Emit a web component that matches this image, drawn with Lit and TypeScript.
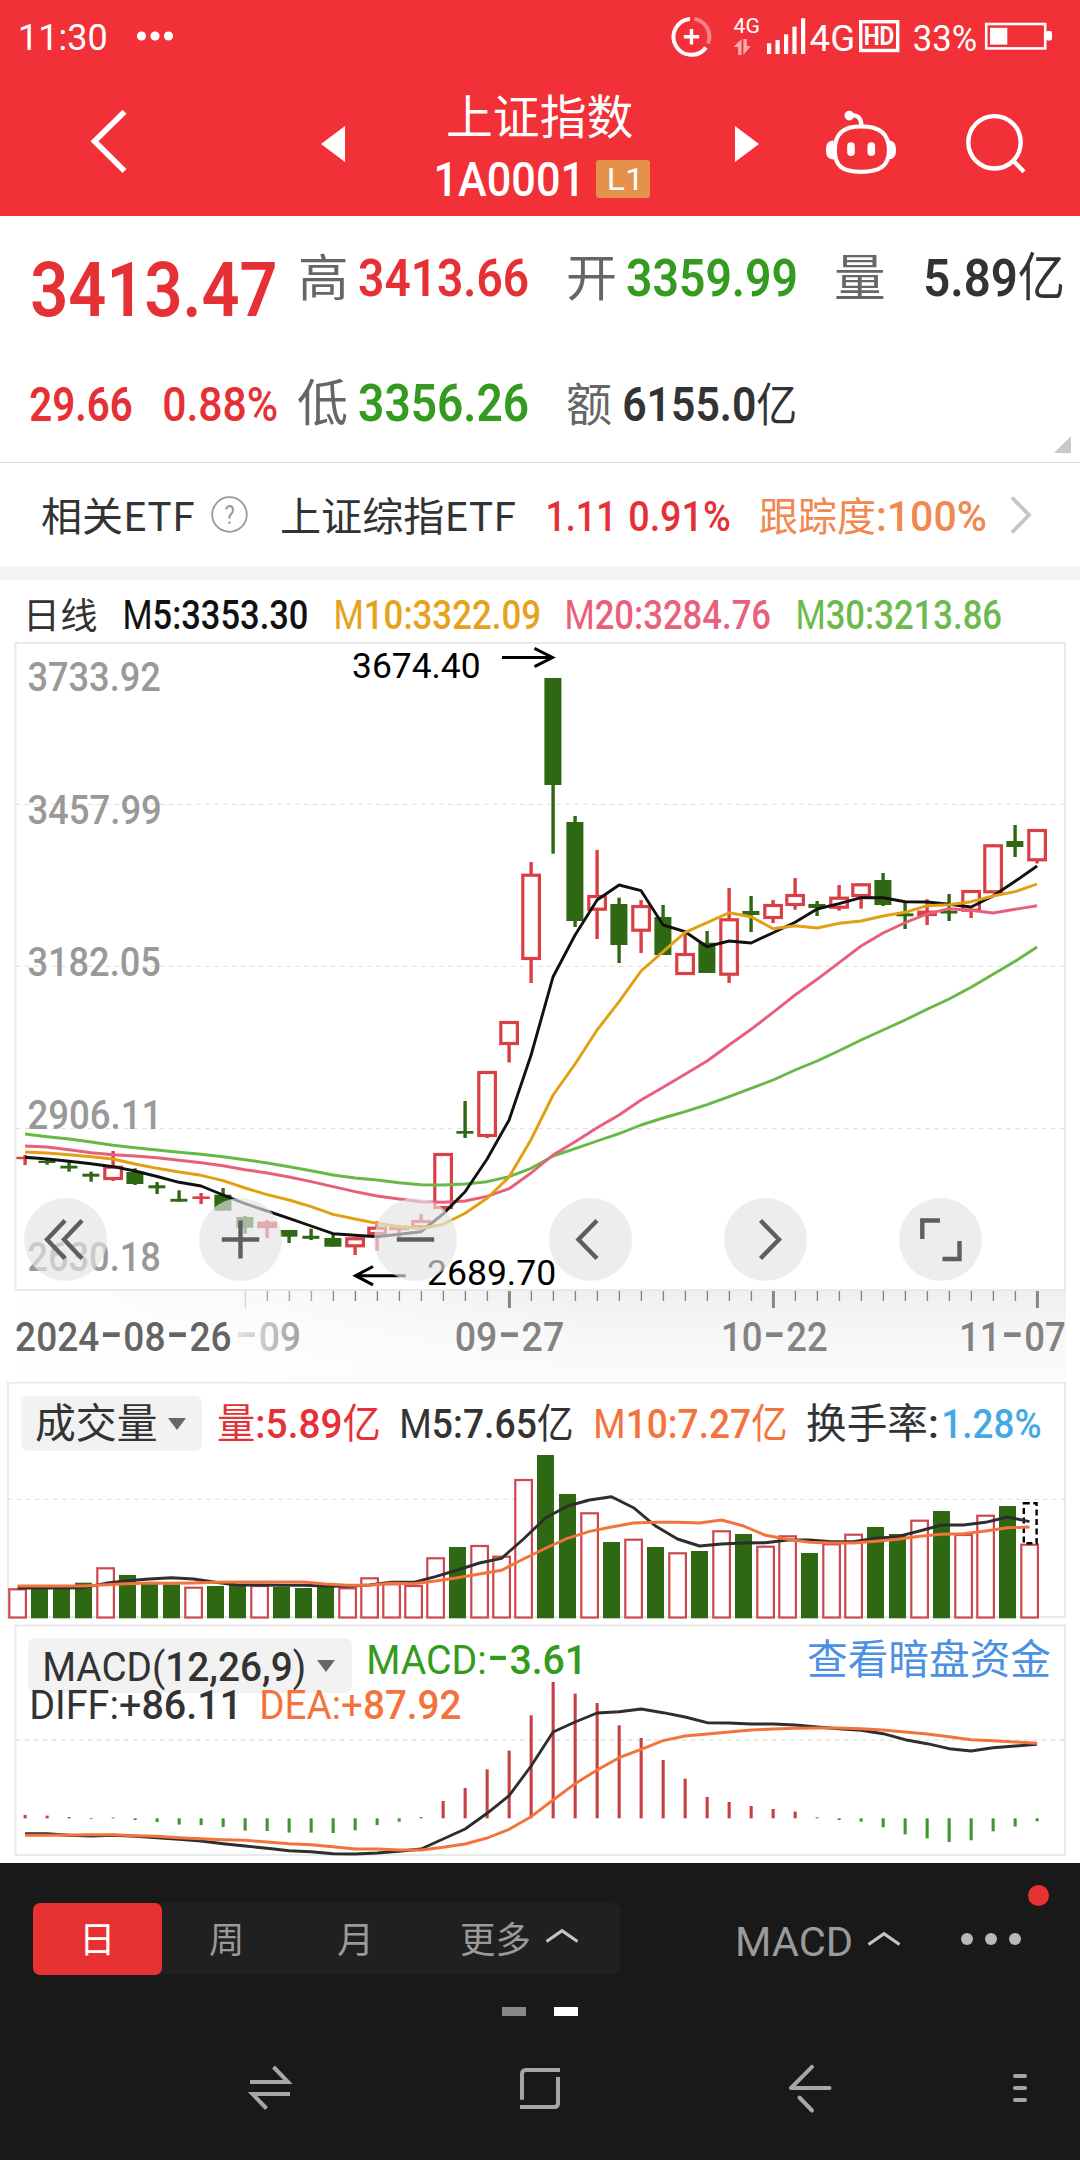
import { LitElement, html, svg, css } from "lit";
import { customElement } from "lit/decorators.js";

/* ---------- text fitted to an ink width ---------- */

const NUM = 'Roboto, "Noto Sans CJK SC", sans-serif';
const HAN = '"Noto Sans CJK SC", sans-serif';
const WIDE = 'Inter, Roboto, sans-serif';

interface Seg { t: string; size?: number; weight?: number; family?: string; dy?: number; cls?: string; }
type Content = string | Seg[];

const ctx = document.createElement("canvas").getContext("2d")!;

function fitted(content: Content, x: number, y: number, w: number, size: number, cls: string, weight = 500, family = NUM) {
  const segs: Seg[] = typeof content === "string" ? [{ t: content }] : content;
  let total = 0, left = 0, right = 0;
  segs.forEach((s, i) => {
    ctx.font = `${s.weight ?? weight} ${s.size ?? size}px ${s.family ?? family}`;
    const m = ctx.measureText(s.t);
    if (i === 0) left = -m.actualBoundingBoxLeft;
    if (i === segs.length - 1) right = m.width - m.actualBoundingBoxRight;
    total += m.width;
  });
  const k = w / (total - left - right);
  let prev = 0;
  return svg`<text class=${cls} font-family=${family} font-size=${size} font-weight=${weight}
    transform=${`translate(${x} ${y}) scale(${k} 1) translate(${-left} 0)`}>${segs.map((s) => {
      const d = (s.dy ?? 0) - prev;
      prev = s.dy ?? 0;
      return svg`<tspan class=${s.cls ?? cls} dy=${d} font-family=${s.family ?? family} font-size=${s.size ?? size} font-weight=${s.weight ?? weight}>${s.t}</tspan>`;
    })}</text>`;
}

/* A box as tall as the capitals; its lower edge is the baseline. */
function ink(content: Content, w: number, size: number, cls: string, weight = 500, family = NUM) {
  const h = Math.round(size * 0.711);
  return html`<svg class="ink" width=${w} height=${h} viewBox="0 0 ${w} ${h}">${fitted(content, 0, h, w, size, cls, weight, family)}</svg>`;
}

const han = (t: string): Seg => ({ t, family: HAN, weight: 400 });
const thin = (t: string): Seg => ({ t, weight: 400 });
const dash = (t = "-"): Seg => ({ t, family: WIDE, weight: 400, size: 58, dy: 1.5 });

/* ---------- series ---------- */

// kind, body top, body bottom, wick top, wick bottom
type Candle = ["r" | "g", number, number, number, number];
const candles: Candle[] = [
  ["r", 1156.8, 1159.2, 1155, 1165], ["g", 1160.7, 1163, 1159.7, 1164.7], ["g", 1165.7, 1168.5, 1162, 1171.7],
  ["g", 1173.7, 1176.7, 1171.7, 1181.7], ["r", 1165.7, 1180, 1151, 1181], ["g", 1172, 1184, 1168.3, 1185],
  ["g", 1185.3, 1188.3, 1182, 1194], ["g", 1198.8, 1201.7, 1190.3, 1201.7], ["r", 1196.4, 1199, 1193, 1204],
  ["g", 1194.7, 1210.7, 1188, 1210.7], ["g", 1217, 1227.7, 1216, 1233.7], ["r", 1221.7, 1228, 1220, 1238],
  ["g", 1230, 1236.7, 1230, 1243], ["g", 1235.8, 1238.8, 1228.7, 1240], ["g", 1238, 1246.7, 1233.7, 1246.7],
  ["r", 1237.3, 1247.3, 1237.3, 1255], ["r", 1226.7, 1235, 1221.3, 1250.7], ["r", 1225.7, 1230, 1225.7, 1237],
  ["r", 1220, 1228.3, 1214, 1228.3], ["r", 1153, 1209, 1153, 1210.7], ["g", 1131, 1133.7, 1101, 1138],
  ["r", 1071, 1137, 1071, 1138], ["r", 1021, 1045, 1021, 1062.5], ["r", 873.7, 960, 862, 983],
  ["g", 678, 785, 678, 853.7], ["g", 822, 921, 816, 927], ["r", 895, 910.7, 850, 939],
  ["g", 904, 945, 897.7, 963], ["r", 905, 931.7, 900, 953], ["g", 917, 955, 905, 955],
  ["r", 953, 975, 932, 975], ["g", 942.7, 973, 931, 973], ["r", 918.3, 975.7, 888, 983],
  ["g", 911, 915, 896, 932], ["r", 904, 919, 900, 923], ["r", 894, 906, 878, 909.7],
  ["g", 904, 908, 901, 916], ["r", 896.7, 908.7, 885, 910.7], ["r", 883.3, 897, 883.3, 908.7],
  ["g", 880, 905, 873, 906], ["g", 913.3, 916.3, 902.7, 929], ["r", 910.7, 916, 899.3, 925],
  ["g", 910.8, 913.5, 894, 921], ["r", 890, 911.7, 890, 918], ["r", 844.3, 893.3, 844.3, 893.3],
  ["g", 841, 847, 825, 857], ["r", 829, 861.3, 829, 863.5],
];

const m5 = [1157.3, 1159, 1161.3, 1163.7, 1166.7, 1171, 1176.5, 1182.3, 1186, 1195, 1203.7, 1211, 1218.3, 1226, 1233.7, 1235.3, 1236.7, 1234.3, 1231.7, 1214, 1191.7, 1159, 1120, 1055, 976.7, 935, 900, 885, 890.7, 925, 931.7, 946.7, 941, 943, 932.7, 922.3, 909, 903.7, 897.7, 897.7, 901.7, 902, 904.3, 907, 896, 881.3, 866];
const m10 = [1152, 1153, 1154.7, 1156.7, 1159, 1164, 1168.3, 1172, 1175.3, 1180.7, 1188, 1194.7, 1200, 1206.7, 1214.3, 1219, 1223.3, 1226.7, 1228.5, 1224.3, 1213.3, 1198.3, 1177, 1139.5, 1095, 1064, 1030, 1001.7, 971, 951.7, 932.3, 922.7, 912.7, 916.7, 928.7, 925.7, 928, 923.3, 921, 916, 912.3, 905.7, 904.7, 901.7, 896, 891.7, 884];
const m20 = [1146, 1147, 1149.7, 1152.7, 1154.7, 1156, 1157.7, 1160.3, 1162.7, 1165.7, 1169.7, 1173, 1177, 1181.7, 1186.7, 1191.7, 1196, 1199, 1201.7, 1202.3, 1201, 1196.3, 1188.7, 1173, 1155, 1141.7, 1127.7, 1115, 1100, 1087.3, 1074.3, 1061, 1045, 1029.3, 1012.3, 995, 979.3, 962.7, 946, 933, 922.7, 914, 908.7, 910.3, 913, 909.3, 905.7];
const m30 = [1134, 1136.7, 1139, 1142, 1145.3, 1147.7, 1150, 1152.3, 1154.3, 1156.7, 1159.7, 1163, 1166.7, 1170.7, 1175, 1178, 1180, 1182.7, 1184.7, 1185, 1184, 1181.7, 1176.7, 1168.3, 1156, 1148.7, 1141, 1133.7, 1125, 1118, 1111.7, 1104.7, 1096.7, 1088.3, 1080, 1070, 1061, 1050.7, 1040, 1030, 1020, 1009.3, 999, 987.3, 974.3, 961.3, 947];

const volumes: ["r" | "g", number][] = [
  ["r", 1588.3], ["g", 1588.3], ["g", 1588.3], ["g", 1582.7], ["r", 1567.3], ["g", 1575], ["g", 1583.3], ["g", 1584.3],
  ["r", 1586.7], ["g", 1586], ["g", 1585], ["r", 1585], ["g", 1587], ["g", 1588], ["g", 1586], ["r", 1587.3],
  ["r", 1577.3], ["r", 1583.3], ["r", 1585], ["r", 1557.3], ["g", 1547], ["r", 1545], ["r", 1555.7], ["r", 1479],
  ["g", 1455], ["g", 1494], ["r", 1512.3], ["g", 1542], ["r", 1538.7], ["g", 1547], ["r", 1552.3], ["g", 1551],
  ["r", 1530.3], ["g", 1534], ["r", 1545.7], ["r", 1535.3], ["g", 1553], ["r", 1543.3], ["r", 1533.7], ["g", 1527],
  ["g", 1534], ["r", 1519.7], ["g", 1511], ["r", 1534], ["r", 1514.7], ["g", 1506], ["r", 1543.7],
];
const v5 = [1588, 1588, 1588, 1587.7, 1583.3, 1580.7, 1579, 1577.7, 1579, 1582.3, 1585, 1585, 1585.3, 1585.3, 1586, 1586.3, 1585, 1582.3, 1582.3, 1576.7, 1570, 1563, 1558.3, 1539, 1518, 1506, 1500, 1496.7, 1507.7, 1526, 1539, 1546, 1544, 1543, 1542.7, 1540, 1540, 1541.7, 1541.7, 1538.3, 1536.7, 1531, 1525, 1525, 1522.3, 1517, 1521.7];
const v10 = [1586, 1586, 1586, 1586, 1584.7, 1583.7, 1583, 1583.3, 1583, 1582.3, 1582, 1582, 1582, 1582, 1584, 1585.3, 1585.3, 1583.3, 1583.7, 1581, 1577.7, 1574, 1570.3, 1559, 1548.3, 1538.3, 1531.3, 1527, 1523, 1522.3, 1522.3, 1523, 1520, 1526, 1535.3, 1539.3, 1542.3, 1543, 1543, 1541.3, 1539.3, 1536.3, 1534.3, 1533.7, 1531, 1527.7, 1527];

const hist = [3.3, 2.7, 1.3, -0.8, 0.8, -1.7, -3.7, -6.3, -6.7, -8.7, -12.3, -12.7, -14.3, -14.3, -14.7, -12, -6.7, -3.3, 1.2, 17.3, 30.3, 49, 67.7, 103, 136.3, 124.7, 115.3, 93, 80.3, 58.3, 39.7, 21.3, 16.3, 12.3, 9.3, 6.7, 1, -1.7, -3.3, -9, -16, -20, -23.7, -22, -13, -8.3, -3];
const diff = [1833.7, 1833.7, 1835.3, 1836, 1835.3, 1836.3, 1837.7, 1839.3, 1841, 1843.7, 1846, 1848.3, 1850.7, 1851.7, 1853.7, 1854, 1853, 1851.3, 1849, 1839, 1829, 1813.3, 1795.7, 1766, 1732, 1722, 1713, 1711.7, 1709, 1712.7, 1717, 1722.7, 1723, 1724, 1724, 1725, 1727, 1728.7, 1730.3, 1733.7, 1739.7, 1743.7, 1748.7, 1751, 1747.7, 1746, 1744.3];
const dea = [1835.3, 1835.3, 1835, 1834.7, 1834.7, 1835.7, 1836.3, 1837.7, 1838.7, 1839.7, 1840.3, 1842, 1843.7, 1844.7, 1846.7, 1849, 1849, 1850, 1850, 1847.3, 1844, 1838, 1829.3, 1816.7, 1800, 1783.7, 1770, 1757.7, 1749.3, 1740.7, 1736, 1734, 1732, 1730, 1729, 1728.3, 1728, 1728, 1728.7, 1730, 1732, 1734, 1736.7, 1739.7, 1740.7, 1742, 1743.3];

const STEP = 22;
const kx = (i: number) => 25.1 + STEP * i;
const vx = (i: number) => 17.5 + STEP * i;
const pts = (ys: number[], x: (i: number) => number) => ys.map((y, i) => `${x(i).toFixed(1)},${y}`).join(" ");
const curve = (ys: number[], x: (i: number) => number, cls: string) => svg`<polyline class="line ${cls}" points=${pts(ys, x)} />`;

const shared = css`
  svg { display: block; overflow: visible; }
  svg.canvas { position: absolute; left: 0; top: 0; overflow: hidden; }
  .ink { flex: none; }
  text { white-space: pre; }
  .white { fill: #fff; } .red { fill: #e53035; } .green { fill: #349a20; } .dark { fill: #333; }
  .grey { fill: #666; } .mute { fill: #999; } .orange { fill: #f08850; } .black { fill: #111; }
  .gold { fill: #e5a21a; } .pink { fill: #e9607c; } .lime { fill: #6cba4e; } .coral { fill: #f4733c; }
  .sky { fill: #45a8e6; } .blue { fill: #4b90e2; } .pure { fill: #000; } .axis { fill: #838383; } .date { fill: #646464; }
  .frame { fill: none; stroke: #e9e9e9; stroke-width: 2; }
  .grid { stroke: #e2e2e2; stroke-width: 1.3; stroke-dasharray: 4.5 4.5; }
  .line { fill: none; stroke-width: 2.9; stroke-linejoin: round; }
  .s-black { stroke: #111; } .s-gold { stroke: #e0a012; } .s-pink { stroke: #e85f7c; } .s-lime { stroke: #66b944; }
  .s-dark { stroke: #2e2e2e; } .s-coral { stroke: #f4733c; }
  .up { fill: #fff; stroke: #d93f45; stroke-width: 3.2; }
  .upv { fill: #fff; stroke: #cc484e; stroke-width: 2.2; }
  .down { fill: #2f6813; }
  .pill { display: flex; align-items: flex-end; background: #f2f2f2; border-radius: 7px; box-sizing: border-box; }
`;

/* ---------- header ---------- */

@customElement("app-header")
class AppHeader extends LitElement {
  static styles = [shared, css`
    :host { display: block; height: 216px; background: #f13037; }
    .status { display: flex; justify-content: space-between; height: 72px; padding: 0 28px 0 21px; }
    .clock { display: flex; align-items: flex-end; height: 50px; gap: 31px; }
    .clock .dots { margin-bottom: 9px; }
    .bar { display: grid; grid-template-columns: 91px 230px 114px 300px 91px 140px auto; height: 144px; }
    .back { margin-top: 38px; } .tri { margin-top: 54px; }
    .robot { margin-top: 38px; } .search { margin-top: 41px; }
    .title { display: flex; flex-direction: column; }
    .name { display: flex; align-items: flex-end; height: 62px; padding-left: 13px; }
    .code { display: flex; align-items: flex-end; height: 62px; padding-left: 1.5px; }
    .badge { display: flex; align-items: flex-end; width: 54px; height: 38px; box-sizing: border-box; padding: 0 0 8px 13px;
      margin: 0 0 -2px 18.5px; border-radius: 3px; background: #e5904b; }
  `];
  render() {
    return html`
      <div class="status">
        <div class="clock">
          ${ink("11:30", 85, 37, "white", 400)}
          <svg class="dots" width="36" height="10"><circle class="white" cx="4.5" cy="5" r="4.6"/><circle class="white" cx="18" cy="5" r="4.6"/><circle class="white" cx="31.5" cy="5" r="4.6"/></svg>
        </div>
        <svg width="382" height="72" viewBox="670 0 382 72">
          <g fill="none" stroke="#fff" stroke-width="4">
            <path d="M690 18.9A18 18 0 1 0 706 47.5"/>
            <path d="M694.5 18.9A18 18 0 0 1 708 43.5" stroke-opacity=".4"/>
            <path d="M691.5 29v15.4M683.8 36.7h15.4" stroke-width="3.4"/>
          </g>
          ${fitted("4G", 733.5, 33, 25, 21, "white", 400)}
          <g fill="#fff" fill-opacity=".6"><path d="M741.5 39v16h-3.4v-8h-4.6zM743.4 39v16l7.4-9h-4v-7z"/></g>
          <g class="white"><rect x="767" y="43.3" width="4.2" height="10.7"/><rect x="775.5" y="40" width="4.2" height="14"/><rect x="784" y="34.3" width="4.2" height="19.7"/><rect x="792.4" y="26.7" width="4.2" height="27.3"/><rect x="801" y="18.3" width="4.2" height="35.7"/></g>
          ${fitted("4G", 809.6, 50.5, 43, 36, "white", 400)}
          <rect x="860.7" y="21.7" width="37" height="28.8" fill="none" stroke="#fff" stroke-width="3.4"/>
          ${fitted("HD", 864.5, 45.3, 29, 26, "white", 700)}
          ${fitted("33%", 913.6, 50.5, 62.5, 37, "white", 400)}
          <rect x="986.2" y="24" width="59" height="24.4" fill="none" stroke="#fff" stroke-width="2.6"/>
          <rect class="white" x="990" y="27.8" width="17.3" height="16.8"/><rect class="white" x="1046" y="31" width="6" height="9.5" rx="2"/>
        </svg>
      </div>
      <div class="bar">
        <span></span>
        <svg class="back" width="36" height="64" viewBox="91 110 36 64"><path d="M124.5 111.8 94.5 141.3 124.5 171" fill="none" stroke="#fff" stroke-width="5.6"/></svg>
        <svg class="tri" width="24" height="36"><path class="white" d="M24 0v36L0 18z"/></svg>
        <div class="title">
          <div class="name">${ink("上证指数", 185, 46.5, "white", 400, HAN)}</div>
          <div class="code">${ink("1A0001", 140.5, 48.5, "white", 500)}<span class="badge">${ink("L1", 29, 31, "white", 400)}</span></div>
        </div>
        <svg class="tri" width="24" height="36"><path class="white" d="M0 0v36L24 18z"/></svg>
        <svg class="robot" width="70" height="66" viewBox="826 110 70 66">
          <g fill="none" stroke="#fff" stroke-width="4.2">
            <path d="M861 126.3C843 126.3 834.8 134 834.8 150C834.8 166 842 171.8 861 171.8S889 166 889 150C889 134 880 126.3 861 126.3Z"/>
            <path d="M850 115.6C857.5 114.3 861 118 861.5 125"/>
          </g>
          <path class="white" d="M833.5 140.5C828 140.5 826 144 826 150s2 9.5 8 9.5zM888.5 140.5c5.5 0 7.5 3.5 7.5 9.5s-2 9.5-8 9.5z"/>
          <circle class="white" cx="849.3" cy="115.6" r="4.8"/>
          <rect class="white" x="847.2" y="142.3" width="7.6" height="13.8" rx="3.8"/><rect class="white" x="867.5" y="142.3" width="7.6" height="13.8" rx="3.8"/>
        </svg>
        <svg class="search" width="60" height="62" viewBox="966 113 60 62"><g fill="none" stroke="#fff" stroke-width="4.4"><circle cx="994.5" cy="142.3" r="26.2"/><path d="M1013.5 161 1024 171.8"/></g></svg>
      </div>`;
  }
}

/* ---------- quote and related fund ---------- */

@customElement("quote-board")
class QuoteBoard extends LitElement {
  static styles = [shared, css`
    :host { display: block; }
    .quote { position: relative; display: flex; height: 247px; padding-left: 30px; background: #fff; border-bottom: 1.5px solid #dedede; box-sizing: border-box; }
    .last { width: 268px; }
    .big { display: flex; align-items: flex-end; height: 100px; padding-left: 1.5px; }
    .chg { display: flex; align-items: flex-end; height: 105px; gap: 32px; }
    .cells { display: grid; grid-template-rows: 80px 125px; grid-template-columns: 268px 268px auto; }
    .cell { display: flex; align-items: flex-end; }
    .k { width: 61px; box-sizing: border-box; }
    .k.high { padding-left: 2px; }
    .k.open { padding-left: 1.5px; }
    .k.vol { width: 91px; padding-left: 2px; }
    .k.amt { width: 58px; padding-left: 1px; }
    .corner { position: absolute; right: 9px; bottom: 9px; }
    .fund { display: grid; grid-template-columns: 169px 70.5px 266.5px 82px 130px 250px auto; align-items: end; height: 103px; box-sizing: border-box;
      padding: 0 0 35.5px 42px; background: #fff; }
    .help { margin-bottom: -2.5px; } .go { margin-bottom: -3px; }
    .band { height: 14px; background: #f5f5f5; }
  `];
  render() {
    return html`
      <div class="quote">
        <div class="last">
          <div class="big">${ink("3413.47", 243.5, 76, "red", 600)}</div>
          <div class="chg">${ink("29.66", 101.5, 48, "red", 600)}${ink("0.88%", 113, 48, "red", 500)}</div>
        </div>
        <div class="cells">
          <div class="cell"><span class="k high">${ink("高", 45.5, 50, "grey", 400, HAN)}</span>${ink("3413.66", 168.5, 52, "red", 600)}</div>
          <div class="cell"><span class="k open">${ink("开", 47, 50, "grey", 400, HAN)}</span>${ink("3359.99", 168.5, 52, "green", 600)}</div>
          <div class="cell"><span class="k vol">${ink("量", 47.5, 50, "grey", 400, HAN)}</span>${ink([{ t: "5.89", weight: 600 }, han("亿")], 137.5, 52, "dark", 600)}</div>
          <div class="cell"><span class="k">${ink("低", 49, 50, "grey", 400, HAN)}</span>${ink("3356.26", 168.5, 52, "green", 600)}</div>
          <div class="cell"><span class="k amt">${ink("额", 44, 46, "grey", 400, HAN)}</span>${ink([{ t: "6155.0", weight: 600 }, { ...han("亿"), size: 46 }], 171.5, 48, "dark", 600)}</div>
        </div>
        <svg class="corner" width="17" height="17"><path d="M17 0v17H0z" fill="#c9c9c9"/></svg>
      </div>
      <div class="fund">
        ${ink("相关ETF", 151.5, 40, "dark", 400, HAN)}
        <svg class="help" width="37" height="37"><circle cx="18.5" cy="18.5" r="17.3" fill="none" stroke="#999" stroke-width="1.8"/>${fitted("?", 13.6, 27.5, 10, 26, "mute", 400)}</svg>
        ${ink("上证综指ETF", 233, 40, "dark", 400, HAN)}
        ${ink("1.11", 62, 42, "red", 500)}
        ${ink("0.91%", 100, 42, "red", 500)}
        ${ink([{ ...han("跟踪度"), size: 40 }, { t: ":100%" }], 226, 42, "orange", 500)}
        <svg class="go" width="22" height="38"><path d="M2 1.5 19 19 2 36.5" fill="none" stroke="#c6c6c6" stroke-width="3.8"/></svg>
      </div>
      <div class="band"></div>`;
  }
}

/* ---------- daily candles ---------- */

@customElement("k-chart")
class KChart extends LitElement {
  static styles = [shared, css`
    :host { display: block; background: #fff; }
    .legend { display: grid; grid-template-columns: 96px 211px 231.5px 230.5px auto; align-items: end; height: 62px; box-sizing: border-box; padding: 0 0 13.5px 28.5px; }
    .plot { position: relative; height: 740px; }
    .tools { position: absolute; left: 24px; top: 556px; display: flex; gap: 92px; }
    .tool { width: 83px; height: 83px; border-radius: 50%; background: rgba(228, 228, 228, .66); }
    .tool path { fill: none; stroke: #5e5e5e; stroke-width: 4.4; }
    .arrow { fill: none; stroke: #000; stroke-width: 3; }
    .faded { fill: url(#fade); }
  `];
  private candle([kind, top, bottom, high, low]: Candle, i: number) {
    const x = kx(i);
    const wick = kind === "r" ? "#d93f45" : "#2f6813";
    const flat = bottom - top < 4;
    return svg`<rect x=${x - 1.7} y=${high} width="3.4" height=${low - high} fill=${wick} />
      ${kind === "g" ? svg`<rect class="down" x=${x - 8.7} y=${top} width="17" height=${bottom - top} />`
        : flat ? svg`<rect fill=${wick} x=${x - 8.7} y=${top} width="17.4" height=${bottom - top} />`
        : svg`<rect class="up" x=${x - 8.3} y=${top + 1.5} width="16.6" height=${Math.max(bottom - top - 3, 1)} />`}`;
  }
  render() {
    const labels: [string, number, number][] = [["3733.92", 690.7, 131.5], ["3457.99", 823.8, 131.5], ["3182.05", 975.8, 131.5], ["2906.11", 1128.8, 127.5], ["2630.18", 1270.8, 131.5]];
    const icons = [
      "M41 22.5 23 41.5 41 60.5M58 22.5 40 41.5 58 60.5",
      "M22.8 41.5h37.4M41.5 22.5v38",
      "M22.8 41.5h37.4",
      "M48 22.5 29.5 41.5 48 60.5",
      "M36.5 22.5 55 41.5 36.5 60.5",
      "M41 22.5H23.3V41M43.5 61H60.5V43",
    ];
    return html`
      <div class="legend">
        ${ink("日线", 68, 36.5, "dark", 400, HAN)}
        ${ink([thin("M"), { t: "5:3353.30" }], 182, 40, "black", 500)}
        ${ink([thin("M"), { t: "10:3322.09" }], 203.5, 40, "gold", 500)}
        ${ink([thin("M"), { t: "20:3284.76" }], 203.5, 40, "pink", 500)}
        ${ink([thin("M"), { t: "30:3213.86" }], 203.5, 40, "lime", 500)}
      </div>
      <div class="plot">
        <svg class="canvas" width="1080" height="740" viewBox="0 642 1080 740">
          <defs>
            <linearGradient id="strip" x1="0" y1="0" x2="0" y2="1"><stop offset="0" stop-color="#efefef"/><stop offset=".5" stop-color="#f7f7f7"/><stop offset="1" stop-color="#fbfbfb"/></linearGradient>
            <linearGradient id="veil" x1="0" y1="0" x2="1" y2="0"><stop offset="0" stop-color="#fff" stop-opacity=".95"/><stop offset=".5" stop-color="#fff" stop-opacity=".6"/><stop offset="1" stop-color="#fff" stop-opacity="0"/></linearGradient>
            <linearGradient id="fade" x1="0" y1="0" x2="1" y2="0"><stop offset="0" stop-color="#e4e4e4"/><stop offset=".35" stop-color="#cfcfcf"/><stop offset="1" stop-color="#a0a0a0"/></linearGradient>
          </defs>
          <rect x="15" y="1290" width="1051" height="90" fill="url(#strip)"/>
          <rect x="15" y="1290" width="585" height="91" fill="url(#veil)"/>
          <rect class="frame" x="15.5" y="643" width="1049.5" height="647"/>
          ${[804.3, 966.3, 1128.7].map((y) => svg`<path class="grid" d=${`M16 ${y}H1065`} />`)}
          ${labels.map(([t, y, w]) => fitted(t, 28.3, y, w, 41, "mute", 500))}
          ${candles.map((c, i) => this.candle(c, i))}
          ${curve(m30, kx, "s-lime")}${curve(m20, kx, "s-pink")}${curve(m5, kx, "s-black")}${curve(m10, kx, "s-gold")}
          ${fitted("3674.40", 353, 678, 126, 35, "pure", 400)}
          <path class="arrow" d="M502 657.5h50M534.5 648.3 552.5 657.5 534.5 666.7"/>
          ${fitted("2689.70", 428, 1285, 126.5, 35, "pure", 400)}
          <path class="arrow" d="M405.6 1275.7H356M373 1266.5 355.5 1275.7 373 1284.9"/>
          ${Array.from({ length: 37 }, (_, n) => n + 10).map((i) => {
            const major = (i - 10) % 12 === 0;
            const w = major && i > 10 ? 3 : 1.4;
            return svg`<rect x=${kx(i) + 0.3 - w / 2} y="1291" width=${w} height=${major ? 17 : 10} fill=${i === 10 ? "#d4d4d4" : i < 14 ? "#a8a8a8" : "#868686"} />`;
          })}
          ${fitted([dash(), { t: "09", dy: 0 }], 238, 1351, 61, 41, "faded", 500)}
          ${fitted([{ t: "2024" }, dash(), { t: "08" }, dash(), { t: "26" }], 16, 1351, 214.5, 41, "date", 500)}
          ${fitted([{ t: "09" }, dash(), { t: "27" }], 456.5, 1351, 106.5, 41, "axis", 500)}
          ${fitted([{ t: "10" }, dash(), { t: "22" }], 723.7, 1351, 102.8, 41, "axis", 500)}
          ${fitted([{ t: "11" }, dash(), { t: "07" }], 961.7, 1351, 103, 41, "axis", 500)}
        </svg>
        <div class="tools">
          ${icons.map((d) => html`<svg class="tool" viewBox="0 0 83 83"><path d=${d}/></svg>`)}
        </div>
      </div>`;
  }
}

/* ---------- volume ---------- */

@customElement("volume-chart")
class VolumeChart extends LitElement {
  static styles = [shared, css`
    :host { display: block; position: relative; height: 240px; background: #fff; }
    .legend { position: relative; display: grid; grid-template-columns: 196.5px 184px 193.8px 211.5px 136.5px auto; align-items: end; height: 56px; padding-left: 21.3px; }
    .pill { width: 181px; height: 55px; padding: 0 16px 13px 15px; margin-bottom: -12.5px; justify-content: space-between; }
    .caret { margin-bottom: 8px; }
    .guess { fill: #fff; stroke: #000; stroke-width: 2.4; stroke-dasharray: 6 3.5; }
  `];
  render() {
    return html`
      <svg class="canvas" width="1080" height="240" viewBox="0 1382 1080 240">
        <rect class="frame" x="8" y="1382.5" width="1057" height="234.5"/>
        <path class="grid" d="M8 1499.3H1065"/>
        ${volumes.map(([kind, y], i) => kind === "g"
          ? svg`<rect class="down" x=${vx(i) - 8.5} y=${y} width="17" height=${1618.3 - y} />`
          : svg`<rect class="upv" x=${vx(i) - 8.2} y=${y + 1} width="16.6" height=${1616.5 - y} />`)}
        <rect class="guess" x="1023.8" y="1503.3" width="12.8" height="40"/>
        ${curve(v5, vx, "s-dark")}${curve(v10, vx, "s-coral")}
      </svg>
      <div class="legend">
        <div class="pill">${ink("成交量", 120, 40.5, "dark", 400, HAN)}<svg class="caret" width="18" height="12"><path class="grey" d="M0 0h18L9 12z"/></svg></div>
        ${ink([{ ...han("量"), size: 40.5 }, { t: ":5.89" }, { ...han("亿"), size: 40.5 }], 160.5, 41, "red", 500)}
        ${ink([thin("M"), { t: "5:7.65" }, { ...han("亿"), size: 40.5 }], 169.5, 41, "dark", 500)}
        ${ink([thin("M"), { t: "10:7.27" }, { ...han("亿"), size: 40.5 }], 189.5, 41, "coral", 500)}
        ${ink([{ ...han("换手率"), size: 40.5 }, { t: ":" }], 130, 41, "dark", 500)}
        ${ink("1.28%", 96.5, 41, "sky", 500)}
      </div>`;
  }
}

/* ---------- MACD ---------- */

@customElement("macd-chart")
class MacdChart extends LitElement {
  static styles = [shared, css`
    :host { display: block; position: relative; height: 241px; background: #fff; }
    .legend { position: relative; display: grid; grid-template-columns: 341px 438.5px auto; align-items: end; height: 52px; padding-left: 28px; }
    .pill { width: 324px; height: 55px; padding: 0 17px 12px 17px; margin-bottom: -19px; justify-content: space-between; }
    .caret { margin-bottom: 9px; }
    .values { position: relative; display: flex; align-items: flex-end; gap: 27px; height: 45px; padding-left: 31.5px; }
  `];
  render() {
    return html`
      <svg class="canvas" width="1080" height="241" viewBox="0 1622 1080 241">
        <rect class="frame" x="15.5" y="1625.5" width="1049.5" height="229.5"/>
        <path class="grid" d="M16 1740H1065"/>
        ${hist.map((h, i) => svg`<rect x=${kx(i) - 1.5} y=${h > 0 ? 1818.3 - h : 1818.3} width="3.1" height=${Math.abs(h)} fill=${h > 0 ? "#c83f42" : "#3f962e"} />`)}
        ${curve(diff, kx, "s-dark")}${curve(dea, kx, "s-coral")}
      </svg>
      <div class="legend">
        <div class="pill">${ink([thin("MACD"), { t: "(", weight: 400 }, { t: "12,26,9" }, { t: ")", weight: 400 }], 259, 41.5, "dark", 500)}<svg class="caret" width="18" height="12"><path class="grey" d="M0 0h18L9 12z"/></svg></div>
        ${ink([thin("MACD:"), { t: "-", family: WIDE, size: 52, weight: 400 }, { t: "3.61" }], 211, 41.5, "green", 500)}
        ${ink("查看暗盘资金", 242.5, 40.5, "blue", 400, HAN)}
      </div>
      <div class="values">
        ${ink([thin("DIFF:+"), { t: "86.11" }], 203, 41.5, "dark", 500)}
        ${ink([thin("DEA:+"), { t: "87.92" }], 198, 41.5, "coral", 500)}
      </div>`;
  }
}

/* ---------- period bar and system keys ---------- */

@customElement("bottom-bar")
class BottomBar extends LitElement {
  static styles = [shared, css`
    :host { display: block; height: 297px; background: #191919; }
    .periods { display: flex; height: 112px; padding: 40px 0 0 33px; box-sizing: border-box; }
    .seg { display: flex; width: 587px; height: 72px; border-radius: 8px; background: #202020; }
    .p { display: flex; justify-content: center; align-items: flex-end; width: 127px; height: 72px; box-sizing: border-box; padding-bottom: 22.5px; }
    .p.on { width: 129px; background: #e83131; border-radius: 7px; }
    .p.more { width: 204px; gap: 15.5px; padding-left: 44.5px; justify-content: flex-start; }
    .ind { display: flex; align-items: flex-end; gap: 16.5px; height: 52.5px; padding-left: 117.5px; }
    .up-caret { margin-bottom: 9.5px; }
    .dots { margin: 30px 0 0 60px; }
    .badge { margin: -18px 0 0 7px; width: 21px; height: 21px; border-radius: 50%; background: #e83131; }
    .pages { display: flex; justify-content: center; gap: 28px; margin-top: 32px; }
    .pages i { width: 24px; height: 9px; background: #888; } .pages i.on { background: #fff; }
    .keys { display: grid; grid-template-columns: 270px 269px 224px auto; margin-top: 47px; padding-left: 250px; }
    .keys path { fill: none; stroke: #a6a6a6; stroke-width: 4; }
    .tab { fill: #9a9a9a; }
  `];
  render() {
    const caret = html`<svg class="up-caret" width="34" height="14"><path d="M1.5 12.5 17 1.8 32.5 12.5" fill="none" stroke="#c4c4c4" stroke-width="3.2"/></svg>`;
    return html`
      <div class="periods">
        <div class="seg">
          <div class="p on">${ink("日", 25, 36.5, "white", 400, HAN)}</div>
          <div class="p">${ink("周", 31, 36.5, "tab", 400, HAN)}</div>
          <div class="p">${ink("月", 29.5, 36.5, "tab", 400, HAN)}</div>
          <div class="p more">${ink("更多", 68.5, 36.5, "tab", 400, HAN)}${caret}</div>
        </div>
        <div class="ind">${ink("MACD", 113, 41.5, "tab", 400)}${caret}</div>
        <svg class="dots" width="60" height="12"><circle cx="6" cy="6" r="6" fill="#b8b8b8"/><circle cx="30" cy="6" r="6" fill="#b8b8b8"/><circle cx="54" cy="6" r="6" fill="#b8b8b8"/></svg>
        <div class="badge"></div>
      </div>
      <div class="pages"><i></i><i class="on"></i></div>
      <div class="keys">
        <svg width="40" height="50" viewBox="250 2063 40 50"><path d="M250 2082H288L273.5 2067M290 2094H252.5L266.5 2108.5"/></svg>
        <svg width="40" height="50" viewBox="520 2063 40 50"><path d="M522 2099.7V2074Q522 2070 526 2070H560M558 2077V2103Q558 2107 554 2107H520"/></svg>
        <svg width="44" height="50" viewBox="789 2063 44 50"><path d="M829.5 2088H791L812 2066.8M799.5 2097.5 812 2110.5" stroke-linecap="round" stroke-linejoin="round"/></svg>
        <svg width="14" height="50" viewBox="1013 2063 14 50"><path d="M1015 2076h10M1015 2088h10M1015 2100h10" stroke-linecap="round"/></svg>
      </div>`;
  }
}

@customElement("app-root")
class AppRoot extends LitElement {
  static styles = css`
    :host { display: flex; flex-direction: column; width: 1080px; height: 2160px; overflow: hidden; background: #fff; }
  `;
  render() {
    return html`<app-header></app-header><quote-board></quote-board><k-chart></k-chart><volume-chart></volume-chart><macd-chart></macd-chart><bottom-bar></bottom-bar>`;
  }
}
